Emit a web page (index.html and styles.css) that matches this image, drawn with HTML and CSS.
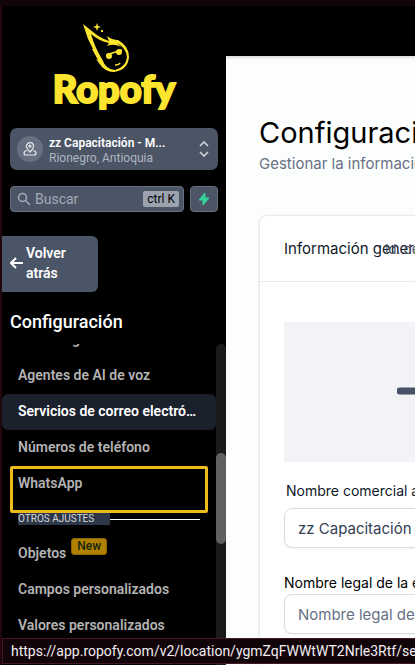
FILE: index.html
```
<!DOCTYPE html>
<html lang="es">
<head>
    <meta charset="UTF-8">
    <meta name="viewport" content="width=device-width, initial-scale=1.0">
    <title>Configuración</title>
    <link rel="stylesheet" href="styles.css">
</head>
<body>

<div class="app">
    <aside class="sidebar">
        <div class="logo">
            <svg class="comet" width="60" height="56" viewBox="0 0 60 56">
                <path fill="#fde52f" fill-rule="evenodd" d="M8 6 L18 14 Q25 20 34 23 L32 18 Q37 22 43 22 Q54 28 54 39 Q53 52 39 54 Q32 54 27 49 L21 41 L23 42 L17 31 L18 31 L13 21 Z M16 16 Q20 30 27 41 Q31 52 40 52 Q51 49 52 39 Q51 30 42 25 L46 29 Q39 25 32 28 L34 25 Q24 23 16 16 Z"/>
                <circle cx="34" cy="38" r="3" fill="#fde52f"/>
                <circle cx="44" cy="34" r="3" fill="#fde52f"/>
                <path d="M31 37 L47 32 M40 47 Q44 47 45 45" fill="none" stroke="#fde52f" stroke-width="1.500"/>
                <path d="M22 5 L23 8 L26 9 L23 10 L22 13 L21 10 L18 9 L21 8 Z M26 12 h2 v2 h-2 Z" fill="#fde52f"/>
            </svg>
            <span class="logo-text">Ropofy</span>
        </div>

        <button class="account" type="button">
            <span class="account-icon">
                <svg width="14" height="14" viewBox="0 0 14 14" fill="none" stroke="#e5e7eb" stroke-width="1.2">
                    <path d="M7 10 Q3.500 6.500 3.500 4.200 A3.500 3.500 0 0 1 10.500 4.200 Q10.500 6.500 7 10 Z"/>
                    <circle cx="7" cy="4.200" r="1"/>
                    <path d="M4 8.500 Q1 9 1 11 Q1 13 3 13 H11 Q13 13 13 11 Q13 9 10 8.500"/>
                </svg>
            </span>
            <span class="account-info">
                <strong>zz Capacitación - M...</strong>
                <span>Rionegro, Antioquia</span>
            </span>
            <svg width="10" height="16" viewBox="0 0 10 16" fill="none" stroke="#d1d5db" stroke-width="1.600">
                <path d="M1 5 L5 1 L9 5 M1 11 L5 15 L9 11"/>
            </svg>
        </button>

        <div class="search-row">
            <label class="search">
                <svg width="14" height="14" viewBox="0 0 14 14" fill="none" stroke="#a3abb8" stroke-width="1.500">
                    <circle cx="5.500" cy="5.500" r="4"/>
                    <path d="M8.500 8.500 L13 13"/>
                </svg>
                <input type="text" placeholder="Buscar" aria-label="Buscar">
                <kbd>ctrl K</kbd>
            </label>
            <button class="quick" type="button" aria-label="Acciones rápidas">
                <svg width="12" height="14" viewBox="0 0 12 14"><path fill="#34d399" stroke="#34d399" stroke-linejoin="round" d="M7 1 L1 8 H5 V13 L11 6 H7 Z"/></svg>
            </button>
        </div>

        <button class="back" type="button">
            <svg width="13" height="12" viewBox="0 0 13 12" fill="none" stroke="#fff" stroke-width="2">
                <path d="M6 1 L1 6 L6 11 M1 6 H13"/>
            </svg>
            <span>Volver atrás</span>
        </button>

        <h2 class="menu-title">Configuración</h2>

        <div class="menu-scroll">
            <nav class="menu">
                <a href="#">Knowledge Base</a>
                <a href="#">Agentes de AI de voz</a>
                <a href="#" class="active">Servicios de correo electrónico</a>
                <a href="#">Números de teléfono</a>
                <a href="#" class="marked">WhatsApp</a>
                <div class="menu-section"><span>OTROS AJUSTES</span></div>
                <a href="#" class="with-badge">Objetos <span class="badge">New</span></a>
                <a href="#">Campos personalizados</a>
                <a href="#">Valores personalizados</a>
            </nav>
            <div class="track"><div class="thumb"></div></div>
        </div>
    </aside>

    <main class="content">
        <h1>Configuración</h1>
        <p class="subtitle">Gestionar la información de tu perfil</p>

        <section class="card">
            <header class="card-header">
                <h3>Información general</h3>
                <span class="card-id">Id. de API</span>
            </header>
            <div class="card-body">
                <div class="picture">
                    <svg width="68" height="68" viewBox="0 0 68 68"><path d="M3 34 H65 M34 3 V27 M34 41 V65" stroke="#475467" stroke-width="7" stroke-linecap="round"/></svg>
                </div>
                <div class="field">
                    <label class="indent" for="business">Nombre comercial amigable</label>
                    <input id="business" type="text" value="zz Capacitación - Master">
                </div>
                <div class="field">
                    <label for="legal">Nombre legal de la empresa</label>
                    <input id="legal" type="text" placeholder="Nombre legal de la empresa">
                </div>
            </div>
        </section>
    </main>
</div>

<div class="status">https://app.ropofy.com/v2/location/ygmZqFWWtWT2Nrle3Rtf/settings</div>

</body>
</html>
```
FILE: styles.css
```
*, *::after {
    box-sizing: border-box;
}
body {
    margin: 0;
    height: 100vh;
    overflow: hidden;
    position: relative;
    background: #000;
    border-top: 6px solid #12050a;
    font-family: Roboto, sans-serif;
}
button, input {
    font-family: inherit;
}
button {
    border: none;
    cursor: pointer;
    text-align: left;
}
.app {
    display: flex;
    height: 100%;
}

/* sidebar */
.sidebar {
    width: 226px;
    flex-shrink: 0;
    display: flex;
    flex-direction: column;
    border-left: 2px solid #22060f;
    background: #000;
}
.logo {
    display: flex;
    flex-direction: column;
    align-items: center;
    height: 122px;
    padding-top: 12px;
    flex-shrink: 0;
}
.comet {
    flex-shrink: 0;
    margin-right: 18px;
}
.logo-text {
    margin-top: -8px;
    color: #fde52f;
    font-family: Lato, sans-serif;
    font-weight: 900;
    font-size: 38px;
    line-height: 44px;
    -webkit-text-stroke: 2px #fde52f;
}
.account {
    display: flex;
    align-items: center;
    gap: 6px;
    height: 42px;
    margin: 0 8px;
    padding: 0 9px 0 7px;
    border-radius: 7px;
    background: #4b5565;
    flex-shrink: 0;
}
.account-icon {
    display: flex;
    align-items: center;
    justify-content: center;
    width: 26px;
    height: 26px;
    border-radius: 50%;
    background: #667080;
}
.account-info {
    flex: 1;
    display: flex;
    flex-direction: column;
    padding-top: 3px;
    font-size: 12px;
    line-height: 15px;
    color: #b0b6c0;
}
.account-info strong {
    color: #fff;
    font-weight: 600;
}
.search-row {
    display: flex;
    gap: 6px;
    margin: 16px 8px 0;
    height: 26px;
    flex-shrink: 0;
}
.search {
    flex: 1;
    display: flex;
    align-items: center;
    gap: 4px;
    min-width: 0;
    padding: 0 4px 0 6px;
    border: 1px solid #657081;
    border-radius: 4px;
    background: #4b5565;
}
.search svg {
    flex-shrink: 0;
}
.search input {
    flex: 1;
    min-width: 0;
    padding: 0;
    border: none;
    background: none;
    font-size: 14px;
    color: #fff;
}
.search input::placeholder {
    color: #a3abb8;
}
.search kbd {
    padding: 0 4px;
    border-radius: 2px;
    background: #9ca3af;
    color: #000;
    font-family: inherit;
    font-size: 12px;
    line-height: 16px;
}
.quick {
    display: flex;
    align-items: center;
    justify-content: center;
    width: 28px;
    padding: 0;
    border: 1px solid #657081;
    border-radius: 4px;
    background: #4b5565;
}
.back {
    display: flex;
    align-items: center;
    gap: 3px;
    width: 96px;
    height: 56px;
    margin-top: 24px;
    padding: 0 20px 2px 8px;
    border-radius: 0 6px 6px 0;
    background: #4a5568;
    color: #fff;
    font-size: 14px;
    font-weight: 600;
    line-height: 20px;
    flex-shrink: 0;
}
.back svg {
    flex-shrink: 0;
}
.menu-title {
    margin: 18px 8px 10px;
    color: #fff;
    font-size: 18px;
    font-weight: 500;
    line-height: 24px;
}
.menu-scroll {
    flex: 1;
    min-height: 0;
    display: flex;
    overflow: hidden;
}
.menu {
    flex: 1;
    min-width: 0;
    margin-top: -22px;
}
.menu a {
    display: block;
    position: relative;
    height: 36px;
    padding: 0 16px;
    border-radius: 6px;
    color: #b3b3b3;
    font-size: 14px;
    font-weight: 600;
    line-height: 35px;
    text-decoration: none;
    white-space: nowrap;
}
.menu a.active {
    overflow: hidden;
    text-overflow: ellipsis;
    background: #1a202c;
    color: #fff;
}
/* highlight frame over the entry */
.menu a.marked::after {
    content: "";
    position: absolute;
    top: 0;
    left: 8px;
    right: 8px;
    height: 47px;
    border: 3px solid #eebb1c;
    border-radius: 2px;
}
.menu-section {
    display: flex;
    align-items: center;
    height: 34px;
    padding: 0 16px;
}
.menu-section::after {
    content: "";
    flex: 1;
    height: 1px;
    background: #fff;
}
.menu-section span {
    width: 92px;
    background: #2d3748;
    color: #d5d8dd;
    font-size: 10px;
    line-height: 12px;
}
.menu a.with-badge {
    display: flex;
    align-items: center;
    gap: 5px;
    padding-bottom: 2px;
}
.badge {
    margin-bottom: 14px;
    padding: 0 5px;
    border: 1px solid #8b6508;
    border-radius: 3px;
    background: #b08000;
    color: #16270c;
    font-size: 12px;
    font-weight: 500;
    line-height: 15px;
}
.track {
    width: 10px;
    border-radius: 5px 5px 0 0;
    background: #1a1a1a;
}
.thumb {
    height: 91px;
    margin-top: 109px;
    border-radius: 5px;
    background: #606060;
}

/* main area */
.content {
    flex: 1;
    min-width: 0;
    overflow: hidden;
    margin-top: 50px;
    padding: 58px 0 0 33px;
    background: #fcfdfd;
    box-shadow: inset 0 4px 3px -2px #ddd;
    font-family: Inter, sans-serif;
    white-space: nowrap;
}
.content h1 {
    margin: 0;
    font-size: 29px;
    font-weight: 400;
    line-height: 38px;
    color: #000;
}
.subtitle {
    margin: 0;
    color: #667085;
    font-size: 15px;
    line-height: 24px;
}
.card {
    min-width: 600px;
    margin-top: 39px;
    border: 1px solid #e8eaee;
    border-radius: 8px;
    background: #fff;
    box-shadow: 0 1px 3px rgba(16, 24, 40, 0.1);
}
.card-header {
    display: flex;
    align-items: center;
    position: relative;
    height: 66px;
    padding: 0 24px;
    border-bottom: 1px solid #e8eaee;
}
.card-header h3 {
    margin: 0;
    font-size: 15px;
    font-weight: 400;
    color: #101828;
}
.card-id {
    position: absolute;
    left: 125px;
    color: #475467;
    font-size: 13px;
}
.card-body {
    padding: 40px 24px;
}
.picture {
    display: flex;
    align-items: center;
    justify-content: center;
    width: 294px;
    height: 140px;
    margin-bottom: 19px;
    border-radius: 3px;
    background: #f2f3f7;
}
.picture svg {
    margin-bottom: 3px;
}
.field {
    display: flex;
    flex-direction: column;
    margin-bottom: 25px;
}
.field label {
    margin-bottom: 7px;
    color: #101828;
    font-size: 14px;
    line-height: 20px;
}
.field label.indent {
    padding-left: 2px;
}
.field + .field label {
    margin-bottom: 1px;
    color: #000;
}
.field input {
    height: 40px;
    padding: 0 13px;
    border: 1px solid #d9dce5;
    border-radius: 8px;
    background: #fff;
    box-shadow: 0 1px 2px rgba(16, 24, 40, 0.05);
    color: #344054;
    font-size: 15px;
}
.field input::placeholder {
    color: #667085;
}

/* link address shown at the bottom of the window */
.status {
    position: absolute;
    left: 2px;
    right: 0;
    bottom: 1px;
    height: 26px;
    padding-left: 8px;
    overflow: hidden;
    border: 1px solid #45152a;
    border-right: none;
    background: #12050a;
    color: #f3edf0;
    font-size: 14px;
    line-height: 24px;
    white-space: nowrap;
}
```
